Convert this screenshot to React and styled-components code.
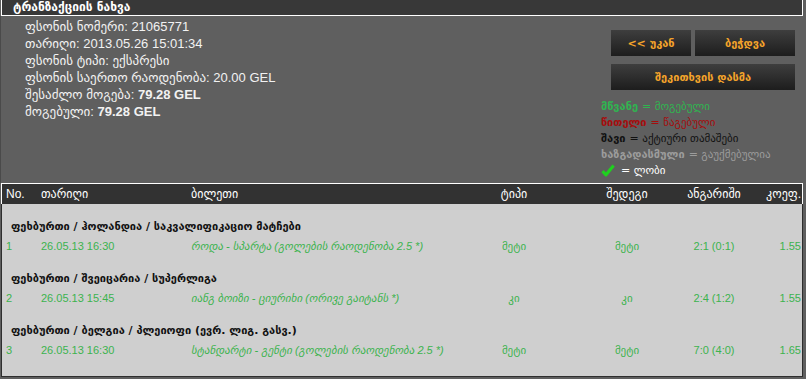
import React from "react";
import styled, { createGlobalStyle } from "styled-components";

const GlobalStyle = createGlobalStyle`
  html, body {
    margin: 0;
    padding: 0;
    background: #5f5f5f;
  }
  body {
    font-family: "Liberation Sans", "DejaVu Sans", sans-serif;
  }
`;

const info = [
  { label: "ფსონის ნომერი:", value: "21065771" },
  { label: "თარიღი:", value: "2013.05.26 15:01:34" },
  { label: "ფსონის ტიპი:", value: "ექსპრესი" },
  { label: "ფსონის საერთო რაოდენობა:", value: "20.00 GEL" },
  { label: "შესაძლო მოგება:", value: "79.28 GEL", bold: true },
  { label: "მოგებული:", value: "79.28 GEL", bold: true },
];

const legend = [
  { key: "მწვანე", text: "მოგებული", color: "#2fb550" },
  { key: "წითელი", text: "წაგებული", color: "#a50d0d" },
  { key: "შავი", text: "აქტიური თამაშები", color: "#111111" },
  { key: "ხაზგადასმული", text: "გაუქმებულია", color: "#9c9c9c" },
];

const groups = [
  {
    title: "ფეხბურთი / ჰოლანდია / საკვალიფიკაციო მატჩები",
    no: "1",
    date: "26.05.13 16:30",
    ticket: "როდა - სპარტა (გოლების რაოდენობა 2.5 *)",
    type: "მეტი",
    result: "მეტი",
    score: "2:1 (0:1)",
    odds: "1.55",
  },
  {
    title: "ფეხბურთი / შვეიცარია / სუპერლიგა",
    no: "2",
    date: "26.05.13 15:45",
    ticket: "იანგ ბოიზი - ციურიხი (ორივე გაიტანს *)",
    type: "კი",
    result: "კი",
    score: "2:4 (1:2)",
    odds: "1.55",
  },
  {
    title: "ფეხბურთი / ბელგია / პლეიოფი (ევრ. ლიგ. გასვ.)",
    no: "3",
    date: "26.05.13 16:30",
    ticket: "სტანდარტი - გენტი (გოლების რაოდენობა 2.5 *)",
    type: "მეტი",
    result: "მეტი",
    score: "7:0 (4:0)",
    odds: "1.65",
  },
];

const CheckIcon = () => (
  <svg width="14" height="13" viewBox="0 0 14 13">
    <path
      d="M1.5 7.2 L5 10.8 L12.6 1.6"
      fill="none"
      stroke="#1fd11f"
      strokeWidth="3.2"
      strokeLinejoin="round"
    />
  </svg>
);

export default function App() {
  return (
    <>
      <GlobalStyle />
      <Page>
        <TitleBar>ტრანზაქციის ნახვა</TitleBar>
        <Panel>
          <InfoList>
            {info.map((row) => (
              <InfoLine key={row.label}>
                {row.label} <InfoValue bold={row.bold}>{row.value}</InfoValue>
              </InfoLine>
            ))}
          </InfoList>
          <Side>
            <Buttons>
              <Btn>&lt;&lt; უკან</Btn>
              <Btn wide>ბეჭდვა</Btn>
              <Btn full>შეკითხვის დასმა</Btn>
            </Buttons>
            <Legend>
              {legend.map((l) => (
                <LegendLine key={l.key} color={l.color}>
                  <b>{l.key}</b> = {l.text}
                </LegendLine>
              ))}
              <LegendLine color="#ffffff">
                <CheckIcon /> = ლობი
              </LegendLine>
            </Legend>
          </Side>
        </Panel>
        <Table>
          <HeadRow>
            <Cell>No.</Cell>
            <Cell>თარიღი</Cell>
            <Cell>ბილეთი</Cell>
            <Cell align="center">ტიპი</Cell>
            <Cell align="center">შედეგი</Cell>
            <Cell align="center">ანგარიში</Cell>
            <Cell align="right">კოეფ.</Cell>
          </HeadRow>
          <Body>
            {groups.map((g) => (
              <Group key={g.no}>
                <GroupTitle>{g.title}</GroupTitle>
                <DataRow>
                  <Cell>{g.no}</Cell>
                  <Cell>{g.date}</Cell>
                  <Cell italic>{g.ticket}</Cell>
                  <Cell align="center">{g.type}</Cell>
                  <Cell align="center">{g.result}</Cell>
                  <Cell align="center">{g.score}</Cell>
                  <Cell align="right">{g.odds}</Cell>
                </DataRow>
              </Group>
            ))}
          </Body>
        </Table>
      </Page>
    </>
  );
}

const Page = styled.div`
  width: 806px;
  height: 379px;
  display: flex;
  flex-direction: column;
  overflow: hidden;
`;

const TitleBar = styled.div`
  width: 789px;
  height: 15px;
  line-height: 15px;
  margin-left: 1px;
  padding-left: 11px;
  background: #383838;
  border: 1px solid #ffffff;
  border-top: none;
  color: #ffffff;
  font-family: "DejaVu Sans", sans-serif;
  font-size: 12px;
  font-weight: bold;
`;

const Panel = styled.div`
  width: 803px;
  height: 167px;
  display: flex;
  justify-content: space-between;
  background: #5f5f5f;
  border-left: 1px solid #4a4a4a;
`;

const InfoList = styled.div`
  padding: 2px 0 0 24px;
  display: flex;
  flex-direction: column;
`;

const InfoLine = styled.div`
  color: #f2f2f2;
  font-size: 13px;
  line-height: 17px;
  white-space: nowrap;
`;

const InfoValue = styled.span`
  font-weight: ${(p) => (p.bold ? "bold" : "normal")};
`;

const Side = styled.div`
  width: 203px;
  padding-top: 14px;
  display: flex;
  flex-direction: column;
`;

const Buttons = styled.div`
  margin-left: 10px;
  width: 184px;
  display: flex;
  flex-wrap: wrap;
  gap: 8px 4px;
`;

const Btn = styled.div`
  height: 26px;
  width: ${(p) => (p.full ? "184px" : p.wide ? "100px" : "80px")};
  display: flex;
  align-items: center;
  justify-content: center;
  background: linear-gradient(#3e3e3e, #1d1d1d);
  color: #f5a42a;
  font-family: "DejaVu Sans", sans-serif;
  font-size: 11px;
  font-weight: bold;
`;

const Legend = styled.div`
  margin-top: 8px;
  display: flex;
  flex-direction: column;
`;

const LegendLine = styled.div`
  display: flex;
  align-items: center;
  gap: 6px;
  height: 16px;
  color: ${(p) => p.color};
  font-family: "DejaVu Sans", sans-serif;
  font-size: 11px;
  white-space: nowrap;
  b {
    margin-right: -2px;
  }
`;

const Table = styled.div`
  margin-left: 1px;
  width: 802px;
  display: flex;
  flex-direction: column;
  font-size: 11px;
`;

const columns = "35px 150px 258px 138px 88px 86px 45px";

const HeadRow = styled.div`
  display: grid;
  grid-template-columns: ${columns};
  height: 20px;
  align-items: center;
  background: #323232;
  border: 1px solid #ffffff;
  border-bottom: none;
  color: #ffffff;
  font-size: 12px;
`;

const Cell = styled.div`
  padding: 0 4px;
  white-space: nowrap;
  text-align: ${(p) => p.align || "left"};
  font-style: ${(p) => (p.italic ? "italic" : "normal")};
  &:last-child {
    padding: 0 1px 0 0;
  }
`;

const Body = styled.div`
  height: 173px;
  background: #cfcfcf;
  border: 1px solid #2e2e2e;
  border-top: none;
  box-sizing: border-box;
`;

const Group = styled.div`
  padding-top: 14px;
  height: 52px;
  box-sizing: border-box;
`;

const GroupTitle = styled.div`
  padding-left: 9px;
  height: 19px;
  line-height: 18px;
  color: #111111;
  font-family: "DejaVu Sans", sans-serif;
  font-size: 11px;
  font-weight: bold;
`;

const DataRow = styled.div`
  display: grid;
  grid-template-columns: ${columns};
  height: 18px;
  align-items: center;
  color: #3cb34e;
`;
